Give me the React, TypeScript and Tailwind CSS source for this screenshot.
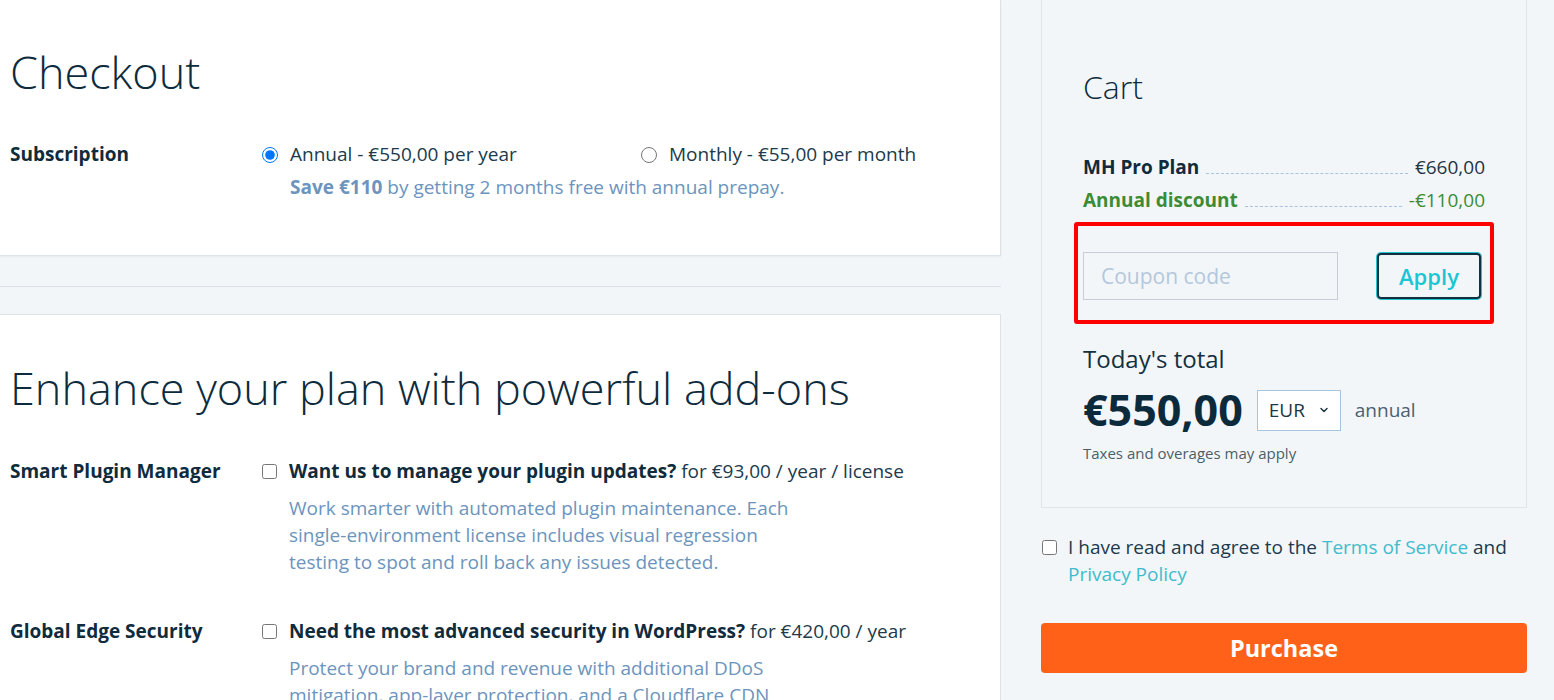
import { ChevronDown } from "lucide-react";

const addons = [
  {
    name: "Smart Plugin Manager",
    question: "Want us to manage your plugin updates?",
    price: "for €93,00 / year / license",
    text: "Work smarter with automated plugin maintenance. Each single-environment license includes visual regression testing to spot and roll back any issues detected.",
  },
  {
    name: "Global Edge Security",
    question: "Need the most advanced security in WordPress?",
    price: "for €420,00 / year",
    text: "Protect your brand and revenue with additional DDoS mitigation, app-layer protection, and a Cloudflare CDN with a full page cache at the edge.",
  },
];

function AddonRow({ addon }: { addon: (typeof addons)[number] }) {
  return (
    <div className="mt-[42px] flex">
      <div className="w-[252px] shrink-0 font-bold text-[#0f2b3c]">{addon.name}</div>
      <div>
        <label className="flex items-center gap-[12px]">
          <input type="checkbox" className="w-[15px] h-[15px] m-0 shrink-0" />
          <span>
            <b className="font-bold text-[#0f2b3c]">{addon.question}</b> {addon.price}
          </span>
        </label>
        <p className="mt-[10px] pl-[27px] max-w-[547px] text-[#6c94bd]">{addon.text}</p>
      </div>
    </div>
  );
}

export default function App() {
  return (
    <div className="flex h-[700px] w-[1554px] overflow-hidden bg-[#f3f6f9] font-['Open_Sans',sans-serif] text-[19px] leading-[27px] text-[#203a4c]">
      {/* left column */}
      <div className="w-[1001px] shrink-0">
        <section className="bg-white border-r border-b border-[#dde2e7] shadow-[0_1px_2px_rgba(0,0,0,0.05)] pl-[10px] pt-[44px] pb-[54px]">
          <h1 className="text-[45px] leading-[56px] font-light text-[#0d2b3d]">Checkout</h1>
          <div className="mt-[41px] flex">
            <div className="w-[252px] shrink-0 font-bold text-[#0f2b3c]">Subscription</div>
            <div>
              <div className="flex">
                <label className="w-[379px] flex items-center gap-[12px]">
                  <input type="radio" name="plan" defaultChecked className="w-4 h-4 m-0" />
                  Annual - €550,00 per year
                </label>
                <label className="flex items-center gap-[12px]">
                  <input type="radio" name="plan" className="w-4 h-4 m-0" />
                  Monthly - €55,00 per month
                </label>
              </div>
              <p className="mt-[6px] pl-[28px] text-[#6c94bd]">
                <b className="font-bold">Save €110</b> by getting 2 months free with annual prepay.
              </p>
            </div>
          </div>
        </section>

        <div className="h-[30px]" />
        <div className="h-[28px] border-t border-[#dde3ea]" />

        <section className="bg-white border-r border-t border-[#dde2e7] pl-[10px] pt-[45px] pb-10">
          <h2 className="text-[45px] leading-[56px] font-light text-[#0d2b3d]">
            Enhance your plan with powerful add-ons
          </h2>
          {addons.map((a) => (
            <AddonRow key={a.name} addon={a} />
          ))}
        </section>
      </div>

      {/* right column */}
      <div className="flex-1 pl-[40px]">
        <div className="w-[486px] border-x border-b border-[#e0e5ea] bg-[#f3f6f9] px-[41px] pt-[67px] pb-[44px]">
          <h2 className="text-[32px] leading-[40px] font-light text-[#0d2b3d]">Cart</h2>

          <div className="mt-[47px] flex items-end">
            <span className="font-bold text-[#0f2b3c]">MH Pro Plan</span>
            <span className="flex-1 mx-[7px] mb-[7px] border-b border-dashed border-[#a9c3dd]" />
            <span className="text-[#1e3546]">€660,00</span>
          </div>
          <div className="mt-[6px] flex items-end text-[#3b8c34]">
            <span className="font-bold">Annual discount</span>
            <span className="flex-1 mx-[7px] mb-[7px] border-b border-dashed border-[#a9c3dd]" />
            <span>-€110,00</span>
          </div>

          <div className="mt-[8px] -mx-[9px] rounded-[3px] border-4 border-[#ff0000] px-[5px] pt-[26px] pb-[20px]">
            <div className="flex items-center justify-between">
              <input
                placeholder="Coupon code"
                className="w-[255px] h-[48px] border border-[#c6cdd4] bg-transparent px-[17px] text-[21px] outline-none placeholder:text-[#b3c7dc]"
              />
              <button className="mr-[4px] w-[104px] h-[46px] rounded-[4px] border-2 border-[#12303f] ring-1 ring-[#22c3d3] text-[22px] font-semibold text-[#1cc4d4]">
                Apply
              </button>
            </div>
          </div>

          <div className="mt-[19px] text-[24px] leading-[32px] text-[#14303f]">Today's total</div>
          <div className="mt-[9px] flex items-center">
            <span className="text-[43px] leading-[52px] font-bold text-[#0b2a3b]">€550,00</span>
            <div className="ml-[14px] flex h-[41px] w-[84px] items-center justify-between border border-[#a9c4de] bg-white pl-[11px] pr-[10px] text-[#1c3646]">
              EUR
              <ChevronDown className="w-[12px] h-[12px]" strokeWidth={3} />
            </div>
            <span className="ml-[14px] text-[#4a6172]">annual</span>
          </div>
          <div className="mt-[7px] text-[15px] leading-[20px] text-[#4b5e6b]">Taxes and overages may apply</div>
        </div>

        <label className="mt-[26px] flex w-[486px] items-start gap-[11px] pl-[1px]">
          <input type="checkbox" className="mt-[6px] w-[15px] h-[15px] m-0 shrink-0" />
          <span>
            I have read and agree to the <span className="text-[#40bccc]">Terms of Service</span> and{" "}
            <span className="text-[#40bccc]">Privacy Policy</span>
          </span>
        </label>

        <button className="mt-[35px] h-[50px] w-[486px] rounded-[4px] bg-[#ff6119] text-[23.5px] font-bold text-white">
          Purchase
        </button>
      </div>
    </div>
  );
}
